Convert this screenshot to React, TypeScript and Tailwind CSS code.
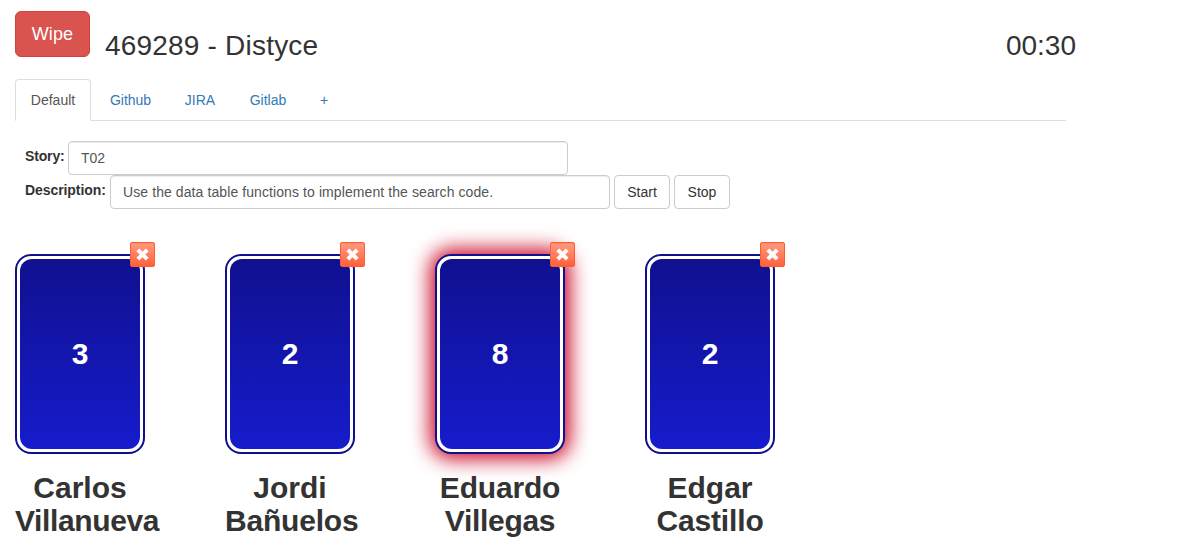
import React from "react";

type Player = { first: string; last: string; vote: string; active?: boolean; firstCls: string; lastCls: string };

const players: Player[] = [
  { first: "Carlos", last: "Villanueva", vote: "3", firstCls: "", lastCls: "tracking-[-0.37px]" },
  { first: "Jordi", last: "Bañuelos", vote: "2", firstCls: "", lastCls: "tracking-[-0.2px]" },
  { first: "Eduardo", last: "Villegas", vote: "8", active: true, firstCls: "tracking-[-0.2px]", lastCls: "tracking-[-0.3px]" },
  { first: "Edgar", last: "Castillo", vote: "2", firstCls: "", lastCls: "tracking-[-0.15px]" },
];

const tabs = [
  { label: "Github", cls: "w-[75px]" },
  { label: "JIRA", cls: "w-[64px]" },
  { label: "Gitlab", cls: "w-[72px]" },
  { label: "+", cls: "w-[40px]" },
];

function CloseButton() {
  return (
    <button
      aria-label="Remove"
      className="absolute -top-[14px] left-[113px] flex size-[25px] items-center justify-center rounded-[2px] border border-[#ff5c33] bg-linear-to-b from-[#ff9a80] to-[#ff5f38] shadow-[inset_0_1px_0_#ff8a6c]"
    >
      <svg className="-mt-px" width="13" height="13" viewBox="0 0 13 13" fill="none" stroke="#fff" strokeWidth="4">
        <path d="M1.8 1.8 11.2 11.2M11.2 1.8 1.8 11.2" />
      </svg>
    </button>
  );
}

function Card({ player }: { player: Player }) {
  return (
    <div className="w-[130px]">
      <div
        className={`relative h-[200px] rounded-[16px] border-2 border-[#10108f] bg-white p-[3px] ${
          player.active ? "shadow-[0_0_20px_5px_#cc0828]" : ""
        }`}
      >
        <div className="flex h-full items-center justify-center rounded-[12px] bg-linear-to-b from-[#101090] to-[#161ccc] pb-[2px] text-[30px] leading-[33px] font-bold text-white">
          {player.vote}
        </div>
        <CloseButton />
      </div>
      <h2 className="mt-[17px] flex flex-col text-center text-[30px] leading-[33px] font-bold whitespace-nowrap">
        <span className={player.firstCls}>{player.first}</span>
        <span className={`min-w-full self-start ${player.lastCls}`}>{player.last}</span>
      </h2>
    </div>
  );
}

export default function App() {
  return (
    <main className="h-[551px] w-[1197px] overflow-hidden bg-white pt-[11px] pl-[15px] font-['Liberation_Sans',sans-serif] text-sm leading-5 text-[#333]">
      <header className="flex h-[68px] w-[1061px] items-start">
        <button className="h-[46px] w-[75px] rounded-md border border-[#d43f3a] bg-[#d9534f] text-lg tracking-[0.1px] text-white">Wipe</button>
        <h1 className="mt-[18px] ml-[15px] text-[28px] leading-[33px] tracking-[0.2px]">469289 - Distyce</h1>
        <span className="mt-[18px] ml-auto text-[28px] leading-[33px]">00:30</span>
      </header>
      <nav className="flex h-[42px] w-[1051px] border-b border-[#ddd]">
        <a className="mr-[2px] h-[42px] w-[76px] rounded-t border border-b-white border-[#ddd] pt-[10px] text-center text-[#555]">Default</a>
        {tabs.map((t) => (
          <a key={t.label} className={`pt-[11px] text-center text-[#337ab7] ${t.cls}`}>
            {t.label}
          </a>
        ))}
      </nav>
      <form className="pt-5 pl-[10px]">
        <div className="flex">
          <label className="w-[43px] pt-[5px] font-bold tracking-[-0.15px] whitespace-nowrap">Story:</label>
          <div className="h-[34px] w-[500px] rounded border border-[#ccc] px-3 py-[6px] text-[#555] shadow-[inset_0_1px_1px_rgba(0,0,0,0.075)]">
            T02
          </div>
        </div>
        <div className="flex">
          <label className="w-[85px] pt-[5px] font-bold tracking-[-0.08px] whitespace-nowrap">Description:</label>
          <div className="h-[34px] w-[500px] rounded border border-[#ccc] px-3 py-[6px] text-[#555] shadow-[inset_0_1px_1px_rgba(0,0,0,0.075)]">
            <span className="tracking-[0.09px]">Use the data table functions to implement the search code.</span>
          </div>
          <button type="button" className="ml-1 h-[34px] w-14 rounded border border-[#ccc]">Start</button>
          <button type="button" className="ml-1 h-[34px] w-14 rounded border border-[#ccc]">Stop</button>
        </div>
      </form>
      <section className="flex gap-20 pt-[45px]">
        {players.map((p) => (
          <Card key={p.first} player={p} />
        ))}
      </section>
    </main>
  );
}
